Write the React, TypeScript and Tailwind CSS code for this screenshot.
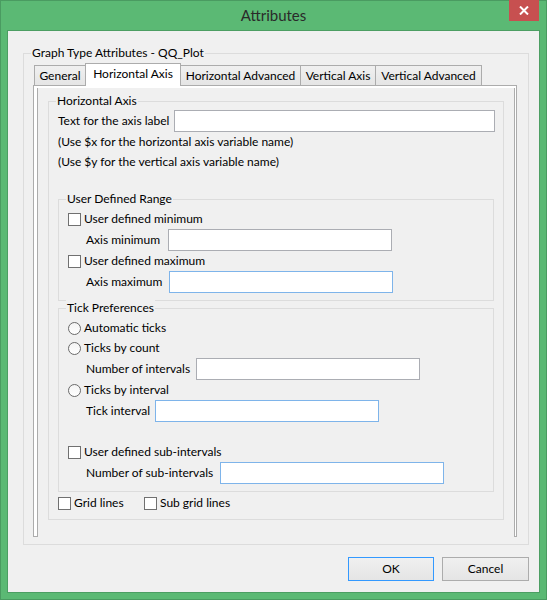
import React from "react";

type Tab = { label: string; w: string; active?: boolean };

const tabs: Tab[] = [
  { label: "General", w: "w-[52px]" },
  { label: "Horizontal Axis", w: "w-[96px]", active: true },
  { label: "Horizontal Advanced", w: "w-[121px]" },
  { label: "Vertical Axis", w: "w-[76px]" },
  { label: "Vertical Advanced", w: "w-[107px]" },
];

function GroupBox({
  label,
  className,
  children,
}: {
  label: string;
  className: string;
  children?: React.ReactNode;
}) {
  return (
    <div className={`relative border border-[#dcdcdc] ${className}`}>
      <span className="absolute -top-[9px] left-[7px] bg-[#f0f0f0] px-[1px] leading-[16px]">
        {label}
      </span>
      {children}
    </div>
  );
}

function CheckRow({ label, className = "" }: { label: string; className?: string }) {
  return (
    <div className={`flex h-[20px] items-center ${className}`}>
      <span className="h-[13px] w-[13px] border border-[#707070] bg-white" />
      <span className="ml-[3px] leading-[20px]">{label}</span>
    </div>
  );
}

function RadioRow({ label }: { label: string }) {
  return (
    <div className="flex h-[20px] items-center">
      <span className="h-[13px] w-[13px] rounded-full border border-[#6a6a6a] bg-linear-to-b from-[#f4f4f4] to-white" />
      <span className="ml-[3px] leading-[20px]">{label}</span>
    </div>
  );
}

function FieldRow({
  label,
  labelW,
  boxW,
  focused,
  className = "",
}: {
  label: string;
  labelW: string;
  boxW: string;
  focused?: boolean;
  className?: string;
}) {
  return (
    <div className={`flex h-[22px] items-center ${className}`}>
      <span className={`${labelW} whitespace-nowrap`}>{label}</span>
      <div
        className={`h-[22px] ${boxW} border bg-white ${
          focused ? "border-[#7eb4ea]" : "border-[#abadb3]"
        }`}
      />
    </div>
  );
}

export default function App() {
  return (
    <div className="relative h-[600px] w-[547px] border border-[#4a9b61] bg-[#5bb974] font-[family-name:Lato,'Open_Sans',sans-serif] text-[12px] text-black">
      {/* title bar */}
      <div className="flex h-[29px] items-center justify-center text-[15px] text-[#2a2a2a]">
        Attributes
      </div>
      <div className="absolute -top-px right-[7px] flex h-[21px] w-[30px] items-center justify-center bg-[#c75050]">
        <svg width="10" height="9" viewBox="0 0 10 9">
          <path d="M1 0.5 L9 8.5 M9 0.5 L1 8.5" stroke="white" strokeWidth="2" />
        </svg>
      </div>

      {/* client area */}
      <div className="ml-[6px] h-[563px] w-[533px] border border-[#4c9e63] bg-[#f0f0f0] pl-[15px] pt-[22px]">
        <GroupBox
          label="Graph Type Attributes - QQ_Plot"
          className="h-[492px] w-[506px] pl-[9px] pt-[9px]"
        >
          <div className="w-[484px]">
            {/* tab strip */}
            <div className="ml-[1px] flex h-[22px] items-start">
              {tabs.map((t, i) =>
                t.active ? (
                  <div
                    key={t.label}
                    className={`relative z-10 -ml-px h-[23px] ${t.w} border-x border-t border-[#acacac] bg-white text-center leading-[20px]`}
                  >
                    {t.label}
                  </div>
                ) : (
                  <div
                    key={t.label}
                    className={`${i > 0 ? "-ml-px" : ""} mt-[2px] h-[20px] ${t.w} whitespace-nowrap border-x border-t border-[#acacac] bg-linear-to-b from-[#f0f0f0] to-[#e5e5e5] text-center leading-[20px]`}
                  >
                    {t.label}
                  </div>
                )
              )}
            </div>

            {/* tab page */}
            <div className="h-[452px] border border-[#acacac] bg-white pl-[3px] pr-[1px] pt-[2px]">
              <div className="h-[449px] border-x border-[#acacac] bg-[#f0f0f0] pt-[13px]">
                <GroupBox
                  label="Horizontal Axis"
                  className="ml-[10px] h-[419px] w-[456px] pl-[9px] pt-[8px]"
                >
                  <FieldRow
                    label="Text for the axis label"
                    labelW="w-[116px]"
                    boxW="w-[321px]"
                  />
                  <div className="h-[20px] leading-[20px]">
                    (Use $x for the horizontal axis variable name)
                  </div>
                  <div className="h-[20px] leading-[20px]">
                    (Use $y for the vertical axis variable name)
                  </div>

                  <GroupBox
                    label="User Defined Range"
                    className="mt-[27px] h-[102px] w-[436px] pl-[9px] pt-[9px]"
                  >
                    <CheckRow label="User defined minimum" />
                    <FieldRow
                      label="Axis minimum"
                      labelW="w-[82px]"
                      boxW="w-[224px]"
                      className="pl-[18px]"
                    />
                    <CheckRow label="User defined maximum" />
                    <FieldRow
                      label="Axis maximum"
                      labelW="w-[83px]"
                      boxW="w-[224px]"
                      focused
                      className="pl-[18px]"
                    />
                  </GroupBox>

                  <GroupBox
                    label="Tick Preferences"
                    className="mt-[7px] h-[184px] w-[436px] pl-[9px] pt-[9px]"
                  >
                    <RadioRow label="Automatic ticks" />
                    <RadioRow label="Ticks by count" />
                    <FieldRow
                      label="Number of intervals"
                      labelW="w-[110px]"
                      boxW="w-[224px]"
                      className="pl-[18px]"
                    />
                    <RadioRow label="Ticks by interval" />
                    <FieldRow
                      label="Tick interval"
                      labelW="w-[69px]"
                      boxW="w-[224px]"
                      focused
                      className="pl-[18px]"
                    />
                    <CheckRow label="User defined sub-intervals" className="mt-[20px]" />
                    <FieldRow
                      label="Number of sub-intervals"
                      labelW="w-[134px]"
                      boxW="w-[224px]"
                      focused
                      className="pl-[18px]"
                    />
                  </GroupBox>

                  <div className="mt-[1px] flex h-[20px] items-center">
                    <CheckRow label="Grid lines" className="w-[86px]" />
                    <CheckRow label="Sub grid lines" />
                  </div>
                </GroupBox>
              </div>
            </div>
          </div>
        </GroupBox>

        {/* buttons */}
        <div className="mt-[12px] flex justify-end gap-[8px] pr-[10px]">
          <button className="h-[24px] w-[86px] border border-[#3399ff] bg-linear-to-b from-[#f0f0f0] to-[#e5e5e5]">
            OK
          </button>
          <button className="h-[24px] w-[87px] border border-[#acacac] bg-linear-to-b from-[#f0f0f0] to-[#e5e5e5]">
            Cancel
          </button>
        </div>
      </div>
    </div>
  );
}
